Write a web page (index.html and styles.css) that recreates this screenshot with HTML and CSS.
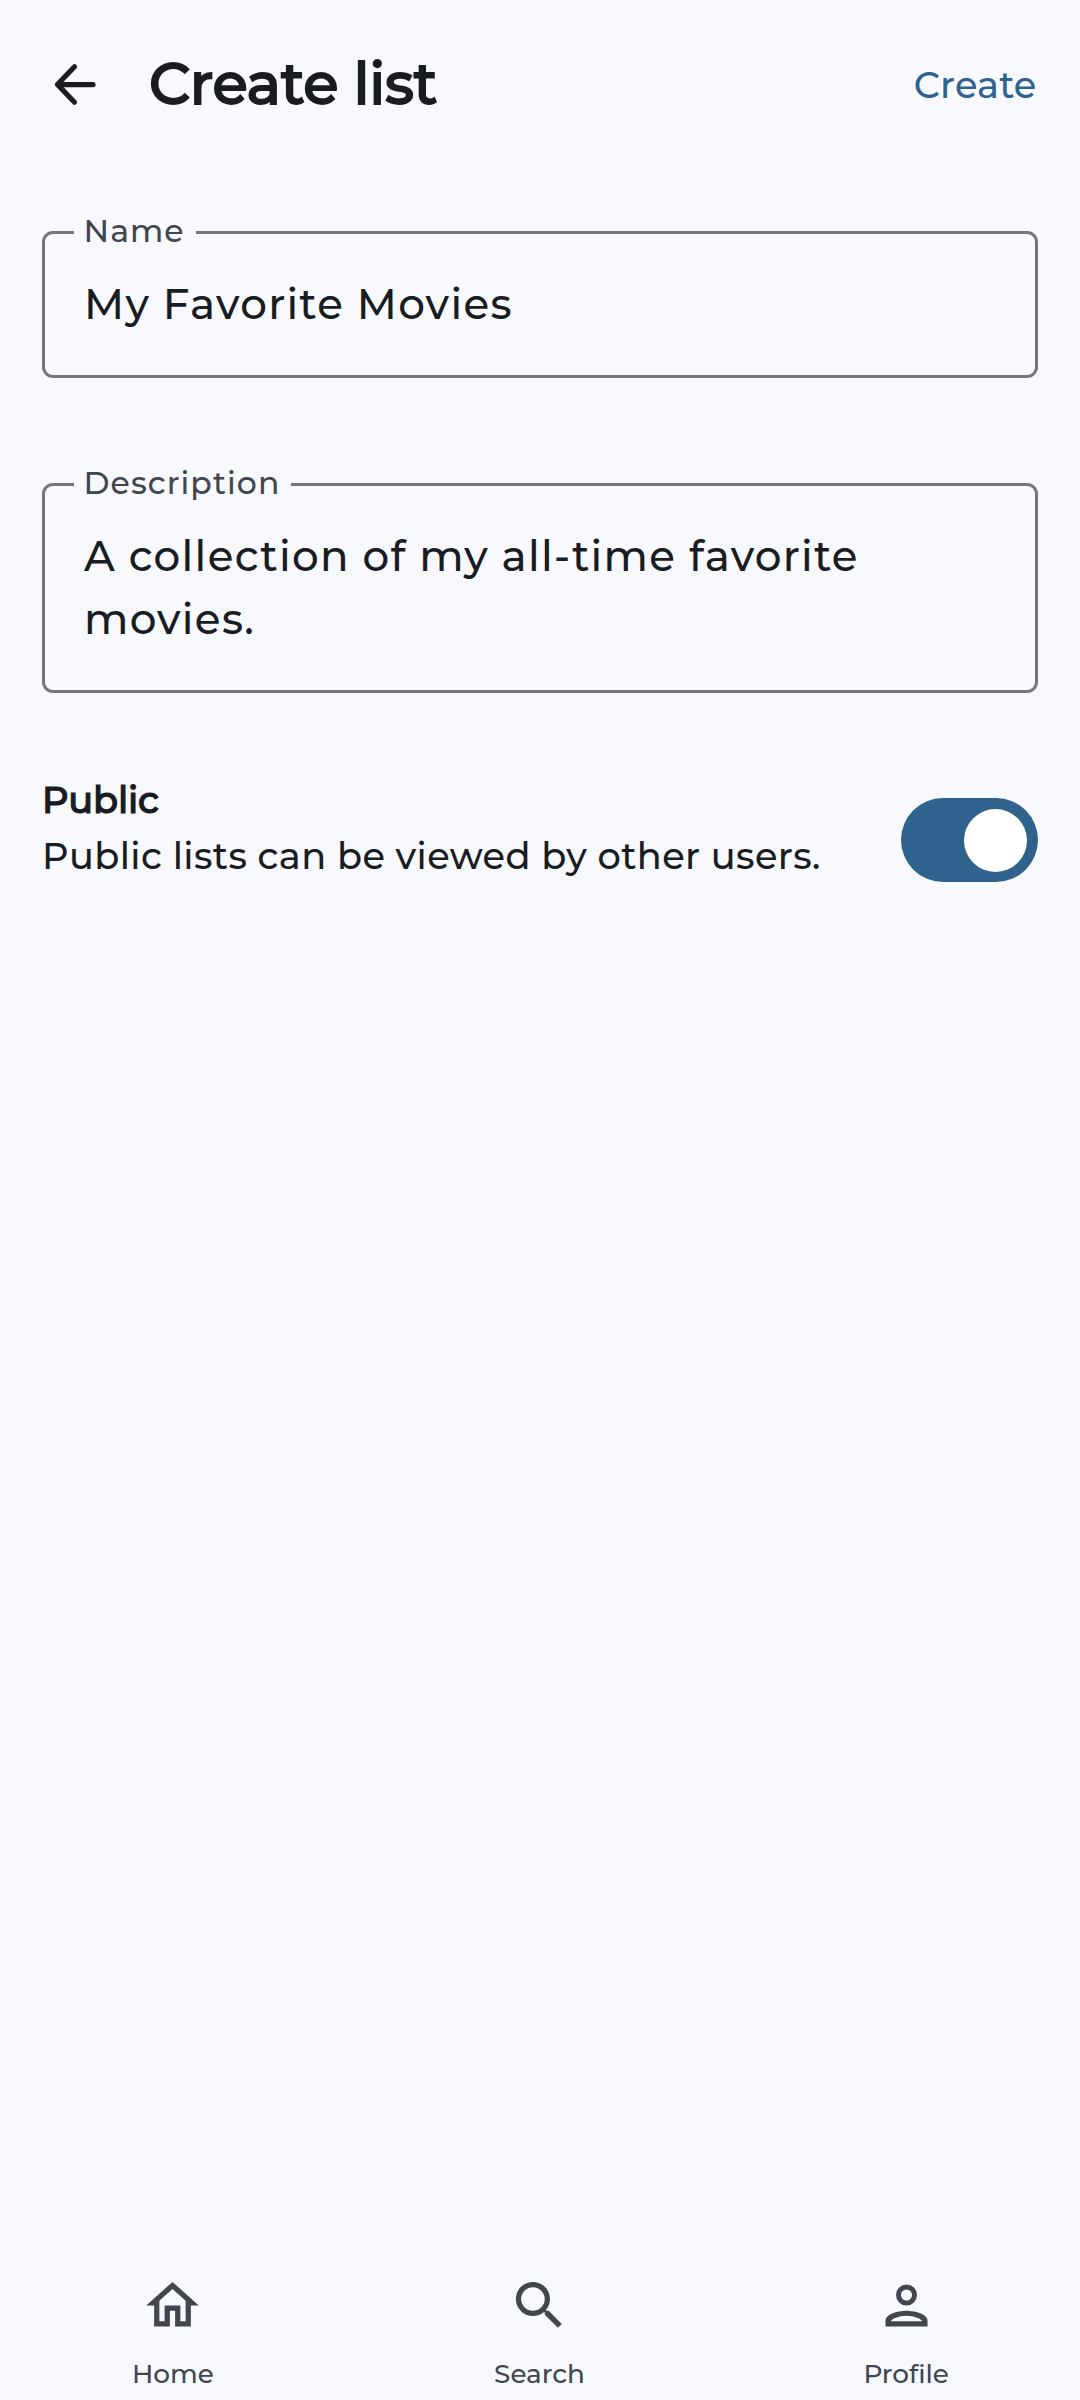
FILE: index.html
```html
<!DOCTYPE html>
<html lang="en">
<head>
<meta charset="utf-8">
<title>Create list</title>
<link rel="stylesheet" href="styles.css">
</head>
<body>
<header class="topbar">
  <svg class="back" viewBox="0 0 63 63" aria-label="Back"><path d="M51 31.5H16M32.5 13.8L15.4 31.5L32.5 49.2"/></svg>
  <h1 class="title">Create list</h1>
  <a class="action">Create</a>
</header>
<main class="form">
  <div class="field">
    <span class="field-label">Name</span>
    <p class="field-value">My Favorite Movies</p>
  </div>
  <div class="field">
    <span class="field-label">Description</span>
    <p class="field-value">A collection of my all-time favorite movies.</p>
  </div>
  <div class="setting">
    <div class="setting-text">
      <h2 class="setting-title">Public</h2>
      <p class="setting-note">Public lists can be viewed by other users.</p>
    </div>
    <div class="switch"><div class="thumb"></div></div>
  </div>
</main>
<nav class="tabs">
  <a class="tab">
    <svg class="tab-icon" viewBox="0 0 24 24"><path d="M12 5.69l5 4.5V18h-2v-6H9v6H7v-7.81l5-4.5M12 3L2 12h3v8h6v-6h2v6h6v-8h3L12 3z"/></svg>
    <span>Home</span>
  </a>
  <a class="tab">
    <svg class="tab-icon" viewBox="0 0 24 24"><path d="M15.5 14h-.79l-.28-.27C15.41 12.59 16 11.11 16 9.5 16 5.91 13.09 3 9.5 3S3 5.91 3 9.5 5.91 16 9.5 16c1.61 0 3.09-.59 4.23-1.57l.27.28v.79l5 4.99L20.49 19l-4.99-5zm-6 0C7.01 14 5 11.99 5 9.5S7.01 5 9.5 5 14 7.01 14 9.5 11.99 14 9.5 14z"/></svg>
    <span>Search</span>
  </a>
  <a class="tab">
    <svg class="tab-icon" viewBox="0 0 24 24"><path fill-rule="evenodd" d="M12 5.9a2.1 2.1 0 1 1 0 4.2 2.1 2.1 0 0 1 0-4.2M12 4a4 4 0 1 0 0 8 4 4 0 0 0 0-8zM12 14c-3.6 0-8 1.4-8 3.7V20h16v-2.3c0-2.3-4.4-3.7-8-3.7zM6.1 18c.1-.7 2.9-2.05 5.9-2.05s5.8 1.35 5.9 2.05z"/></svg>
    <span>Profile</span>
  </a>
</nav>
</body>
</html>
```
FILE: styles.css
```css
* { box-sizing: border-box; }

body {
  margin: 0;
  height: 2400px;
  display: flex;
  flex-direction: column;
  background: #f8f9ff;
  color: #191c20;
  font-family: Montserrat, Inter, sans-serif;
  font-weight: 500;
}

h1, h2, p { margin: 0; font-weight: 500; }

.topbar {
  display: flex;
  align-items: center;
  height: 168px;
  padding: 0 43.5px 0 42px;
}

.back {
  width: 63px;
  height: 63px;
  fill: none;
  stroke: #191c20;
  stroke-width: 5.25;
  stroke-linecap: round;
  stroke-linejoin: round;
}

.title {
  flex: 1;
  padding: 0 0 2px 44px;
  font-size: 57.75px;
  line-height: 72px;
  letter-spacing: -0.35px;
  -webkit-text-stroke: 1.8px #191c20;
}

.action {
  padding-top: 1px;
  color: #2f628c;
  font-size: 36.75px;
  line-height: 52px;
  letter-spacing: 0.155px;
}

.form {
  display: flex;
  flex-direction: column;
  gap: 105px;
  padding: 63px 42px 0;
}

.field {
  position: relative;
  padding: 39px;
  border: 3px solid #72777f;
  border-radius: 11px;
}

.field-label {
  position: absolute;
  top: -19px;
  left: 29px;
  padding: 0 11px 0 9.5px;
  background: #f8f9ff;
  color: #42474e;
  font-size: 31.5px;
  line-height: 32px;
  letter-spacing: 1.05px;
}

.field-value {
  font-size: 42px;
  line-height: 63px;
  letter-spacing: 1.31px;
}

.setting {
  display: flex;
  justify-content: space-between;
  align-items: flex-end;
  margin-top: -24px;
}

.setting-text {
  display: flex;
  flex-direction: column;
  gap: 3px;
  font-size: 36.75px;
  line-height: 52.5px;
}

.setting-title {
  font-size: 36.75px;
  letter-spacing: -0.2px;
  -webkit-text-stroke: 1.2px #191c20;
}

.setting-note { letter-spacing: 0.4px; }

.switch {
  display: flex;
  justify-content: flex-end;
  width: 137px;
  height: 84px;
  padding: 10.5px 11px;
  border-radius: 42px;
  background: #2f628c;
}

.thumb {
  width: 63px;
  height: 63px;
  border-radius: 50%;
  background: #fff;
}

.tabs {
  display: grid;
  grid-template-columns: repeat(3, 1fr);
  gap: 21px;
  margin-top: auto;
  padding: 0 1px 5px 0;
  color: #42474e;
}

.tab {
  display: flex;
  flex-direction: column;
  align-items: center;
  gap: 16px;
  font-size: 26.25px;
  line-height: 42px;
}

.tab-icon {
  width: 63px;
  height: 63px;
  fill: #42474e;
}
```
